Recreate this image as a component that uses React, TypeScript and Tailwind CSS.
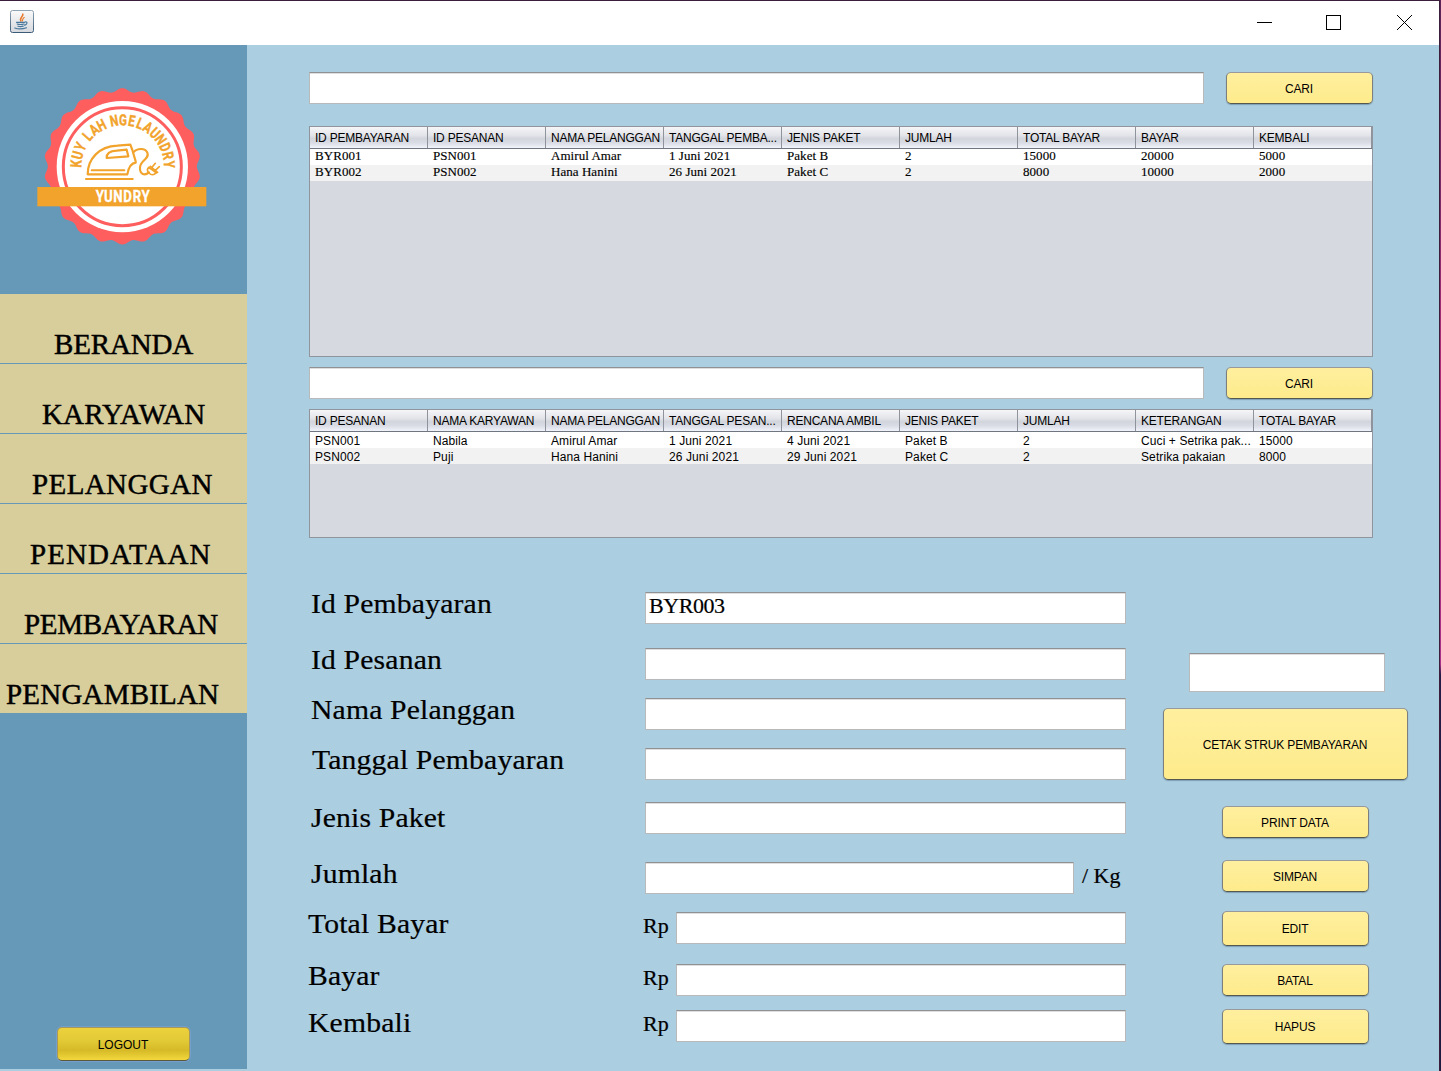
import React from "react";

const sans = "font-['Liberation_Sans',Arial,sans-serif]";
const serif = "font-['Liberation_Serif','Times_New_Roman',serif]";

const scallop = (() => {
  const pts: string[] = [];
  for (let i = 0; i <= 360; i++) {
    const a = (i * Math.PI) / 180;
    const r = 229 + 5.5 * Math.cos(22 * a);
    pts.push(`${(367 + r * Math.sin(a)).toFixed(1)} ${(499 - r * Math.cos(a)).toFixed(1)}`);
  }
  return `M${pts.join("L")}Z`;
})();

const ringLetters = (() => {
  const out: { ch: string; angle: number }[] = [];
  let pos = 0;
  for (const ch of "KUY LAH NGELAUNDRY") {
    if (ch === " ") {
      pos += 0.5;
      continue;
    }
    out.push({ ch, angle: -86.5 + pos * 10.85 });
    pos += 1;
  }
  return out;
})();

function Logo() {
  return (
    <svg className="ml-[37px] h-[158px] w-[170px]" viewBox="111 261 510 474">
      <path d={scallop} fill="#ff5e5e" />
      <circle cx="367" cy="500" r="197" fill="#fff" />
      <circle cx="367" cy="500" r="177" fill="none" stroke="#ff5e5e" strokeWidth="9" />
      <g fill="#f2a32c" stroke="#f2a32c" strokeWidth="1.2" fontFamily="Roboto, sans-serif" fontWeight="700" fontSize="46" textAnchor="middle">
        {ringLetters.map((l, i) => (
          <text key={i} transform={`translate(368 500) rotate(${l.angle}) translate(0 -124) scale(0.76 1)`}>
            {l.ch}
          </text>
        ))}
      </g>
      <g fill="none" stroke="#f2a32c" strokeWidth="6.5" strokeLinecap="round" strokeLinejoin="round">
        <path d="M263 523C263 478 296 439 352 437L391 434L397 450L407 484L407 488Q388 490 382 523Z" />
        <path d="M275 511H373" strokeWidth="6" />
        <path d="M258 537H398" />
        <path d="M320 474C319 459 335 453 350 452L380 449L385 469Z" />
        <path d="M400 457C411 444 436 443 442 458C450 477 421 480 420 502C419 524 434 528 447 517" />
        <path d="M446 502L468 518Q458 530 447 519Q438 510 446 502ZM448 505L451 499L473 517L467 520M456 502L466 490M466 511L478 500" strokeWidth="5" />
      </g>
      <rect x="112" y="561" width="507" height="58" fill="#f2a32c" />
      <text transform="translate(368 605) scale(0.78 1)" fill="#fff" stroke="#fff" strokeWidth="1" fontFamily="Roboto, sans-serif" fontWeight="700" fontSize="51" textAnchor="middle" textLength="208">
        YUNDRY
      </text>
    </svg>
  );
}

function JavaIcon() {
  return (
    <svg className="h-6 w-6" viewBox="0 0 24 24">
      <defs>
        <linearGradient id="cup" x1="0" y1="0" x2="0" y2="1">
          <stop offset="0" stopColor="#fafafa" />
          <stop offset="1" stopColor="#d5d8dd" />
        </linearGradient>
        <linearGradient id="rim" x1="0" y1="0" x2="0" y2="1">
          <stop offset="0" stopColor="#8fa3b3" />
          <stop offset="1" stopColor="#3c5b76" />
        </linearGradient>
      </defs>
      <rect x="0.5" y="0.5" width="23" height="22" rx="2" fill="url(#cup)" stroke="url(#rim)" />
      <g fill="none" strokeLinecap="round">
        <path d="M12.8 4.2C13.8 6.2 9.2 7.2 10.8 11" stroke="#e8792b" strokeWidth="1.6" />
        <path d="M14.2 7.4C12.2 8.4 13 9.6 12.4 11" stroke="#e8792b" strokeWidth="1.1" />
        <path d="M6.5 12.3H14.5M15 12Q17.5 11.7 16.8 13.5Q16 15 14.6 15.2M7.2 14Q10 15 14 14M8 16.2Q10.5 17 13.2 16.2M4.8 18Q10 20 16.5 17.8" stroke="#47779c" strokeWidth="1.2" />
      </g>
    </svg>
  );
}

function Field({ className, value = "" }: { className: string; value?: string }) {
  return (
    <div className={`${serif} shrink-0 border border-[#b7b9bb] border-t-[#8f9193] bg-white pl-[3px] text-[22px] leading-[25px] tracking-[-0.45px] text-black shadow-[inset_0_1px_0_#dedede] [-webkit-text-stroke:0.2px_black] ${className}`}>
      {value}
    </div>
  );
}

function Button({ className, children }: { className: string; children: React.ReactNode }) {
  return (
    <button className={`${sans} flex shrink-0 items-center justify-center rounded-[5px] border border-[#7d7f7c] border-t-[#97999a] border-b-[#55584f] bg-linear-to-b from-[#ffef9e] to-[#feeb8c] pt-px pr-px text-[12px] tracking-[-0.15px] text-black shadow-[0_1px_1px_rgba(90,120,145,0.55)] ${className}`}>
      {children}
    </button>
  );
}

function Table({ head, rows, className, rowClass }: { head: string[]; rows: string[][]; className: string; rowClass: string }) {
  return (
    <div className={`w-[1064px] shrink-0 border border-[#90949c] bg-[#d6d9e0] text-black ${className}`}>
      <div className={`${sans} grid h-[22px] grid-cols-9 border-b border-[#6f7680] bg-[linear-gradient(#f6f6f8_0%,#e3e4e9_40%,#d2d5dc_55%,#d9dce4_75%,#f1f4fb_100%)] text-[12px] leading-[23px] tracking-[-0.22px]`}>
        {head.map((h, i) => (
          <div key={i} className="h-[21px] overflow-hidden border-r border-[#8f939c] pl-[5px] whitespace-nowrap">
            {h}
          </div>
        ))}
      </div>
      {rows.map((r, i) => (
        <div key={i} className={`grid h-4 grid-cols-9 ${rowClass} ${i % 2 ? "bg-[#f2f2f2]" : "bg-white"}`}>
          {r.map((c, j) => (
            <div key={j} className="h-4 overflow-hidden pl-[5px] whitespace-nowrap">
              {c}
            </div>
          ))}
        </div>
      ))}
    </div>
  );
}

const nav = [
  { label: "BERANDA", cls: "pl-[54px] tracking-[-0.15px]" },
  { label: "KARYAWAN", cls: "pl-[42px] tracking-[0.15px]" },
  { label: "PELANGGAN", cls: "pl-[32px] tracking-[0.4px]" },
  { label: "PENDATAAN", cls: "pl-[30px] tracking-[1.1px]" },
  { label: "PEMBAYARAN", cls: "pl-[24px] tracking-[-0.33px]" },
  { label: "PENGAMBILAN", cls: "pl-[6px] tracking-[0.2px]" },
];

const form = [
  { label: "Id Pembayaran", row: "mt-[54px]", pad: "pl-[2px]", value: "BYR003" },
  { label: "Id Pesanan", row: "mt-6", pad: "pl-[2px]" },
  { label: "Nama Pelanggan", row: "mt-[18px]", pad: "pl-[2px]" },
  { label: "Tanggal Pembayaran", row: "mt-[18px]", pad: "pl-[3px]" },
  { label: "Jenis Paket", row: "mt-[22px]", pad: "pl-[2px] pt-1" },
  { label: "Jumlah", row: "mt-7", pad: "pl-[2px]", suffix: "/ Kg" },
  { label: "Total Bayar", row: "mt-[18px]", pad: "-ml-px mr-px", prefix: "Rp" },
  { label: "Bayar", row: "mt-5", pad: "-ml-px mr-px", prefix: "Rp" },
  { label: "Kembali", row: "mt-[14px]", pad: "-ml-px mr-px pt-px", prefix: "Rp" },
];

export default function App() {
  return (
    <div className="flex h-[1071px] w-[1441px] overflow-hidden">
      <div className="flex w-[1439px] shrink-0 flex-col">
        <header className="flex h-[45px] shrink-0 items-start justify-between border-t border-[#3b1d3c] bg-white pt-[9px] pl-[10px]">
          <JavaIcon />
          <svg className="mt-1 mr-[26px] h-[17px] w-[156px]" viewBox="0 0 156 17" fill="none" stroke="#000">
            <path d="M0 8.5H15" />
            <rect x="69.500" y="1.500" width="14" height="14" />
            <path d="M140 1L155 16M155 1L140 16" />
          </svg>
        </header>
        <div className="flex h-[1026px] bg-[#abcee1]">
          <aside className="flex h-[1024px] w-[247px] shrink-0 flex-col bg-[#6698b7] pt-[42px]">
            <Logo />
            <nav className="mt-[49px] flex flex-col">
              {nav.map((n) => (
                <div
                  key={n.label}
                  className={`${serif} h-[70px] border-b border-[#6698b7] bg-[#d8ce9b] pt-[34px] text-[29px] leading-[32px] whitespace-nowrap text-black [-webkit-text-stroke:0.45px_black] ${n.cls}`}
                >
                  {n.label}
                </div>
              ))}
            </nav>
            <button className={`${sans} mt-[313px] ml-[57px] flex h-[34px] w-[133px] shrink-0 items-center justify-center rounded-[5px] border border-[#a6985c] border-b-[#5c583c] bg-[linear-gradient(#ecd23c_0%,#e2c936_40%,#d6ba28_70%,#f2d83c_100%)] pt-[2px] pr-px text-[12px] text-black shadow-[0_0_0_1px_#739fce]`}>
              LOGOUT
            </button>
          </aside>
          <main className="flex flex-1 flex-col pt-[27px] pl-[62px]">
            <div className="flex gap-[22px]">
              <Field className="h-8 w-[895px]" />
              <Button className="h-8 w-[147px]">CARI</Button>
            </div>
            <Table
              className="mt-[22px] h-[231px]"
              rowClass="font-['Liberation_Serif',serif] text-[13px] leading-[13px] tracking-[0.05px] [-webkit-text-stroke:0.15px_black]"
              head={["ID PEMBAYARAN", "ID PESANAN", "NAMA PELANGGAN", "TANGGAL PEMBA...", "JENIS PAKET", "JUMLAH", "TOTAL BAYAR", "BAYAR", "KEMBALI"]}
              rows={[
                ["BYR001", "PSN001", "Amirul Amar", "1 Juni 2021", "Paket B", "2", "15000", "20000", "5000"],
                ["BYR002", "PSN002", "Hana Hanini", "26 Juni 2021", "Paket C", "2", "8000", "10000", "2000"],
              ]}
            />
            <div className="mt-[10px] flex gap-[22px]">
              <Field className="h-8 w-[895px]" />
              <Button className="h-8 w-[147px]">CARI</Button>
            </div>
            <Table
              className="mt-[10px] h-[129px]"
              rowClass="font-['Liberation_Sans',sans-serif] text-[12px] leading-[19px] tracking-[0.1px]"
              head={["ID PESANAN", "NAMA KARYAWAN", "NAMA PELANGGAN", "TANGGAL PESAN...", "RENCANA AMBIL", "JENIS PAKET", "JUMLAH", "KETERANGAN", "TOTAL BAYAR"]}
              rows={[
                ["PSN001", "Nabila", "Amirul Amar", "1 Juni 2021", "4 Juni 2021", "Paket B", "2", "Cuci + Setrika pak...", "15000"],
                ["PSN002", "Puji", "Hana Hanini", "26 Juni 2021", "29 Juni 2021", "Paket C", "2", "Setrika pakaian", "8000"],
              ]}
            />
            <div className="flex">
              <div className="flex w-[817px] shrink-0 flex-col">
                {form.map((f) => (
                  <div key={f.label} className={`${serif} flex h-8 text-black [-webkit-text-stroke:0.2px_black] ${f.row}`}>
                    <div className={`w-[334px] shrink-0 text-[28px] leading-[24px] whitespace-nowrap ${f.pad}`}>
                      <span className="inline-block origin-left scale-x-[1.06] tracking-[0.15px]">{f.label}</span>
                    </div>
                    {f.prefix ? (
                      <>
                        <div className="w-[33px] shrink-0 text-[22px] leading-[28px]">{f.prefix}</div>
                        <Field className="h-8 w-[450px]" />
                      </>
                    ) : f.suffix ? (
                      <>
                        <Field className="ml-[2px] h-8 w-[429px]" />
                        <div className="pl-2 text-[22px] leading-[28px]">{f.suffix}</div>
                      </>
                    ) : (
                      <Field className="ml-[2px] h-8 w-[481px]" value={f.value} />
                    )}
                  </div>
                ))}
              </div>
              <div className="ml-[37px] flex w-[245px] flex-col pt-[115px]">
                <Field className="ml-[26px] h-[39px] w-[196px]" />
                <Button className="mt-4 h-[72px] w-[245px]">CETAK STRUK PEMBAYARAN</Button>
                <Button className="mt-[26px] ml-[59px] h-8 w-[147px]">PRINT DATA</Button>
                <Button className="mt-[22px] ml-[59px] h-8 w-[147px]">SIMPAN</Button>
                <Button className="mt-[19px] ml-[59px] h-[35px] w-[147px]">EDIT</Button>
                <Button className="mt-[18px] ml-[59px] h-8 w-[147px]">BATAL</Button>
                <Button className="mt-[13px] ml-[59px] h-[35px] w-[147px]">HAPUS</Button>
              </div>
            </div>
          </main>
        </div>
      </div>
      <div className="w-px bg-[#3b1d3c]" />
      <div className="w-px bg-[linear-gradient(#5d2358_0%,#7a2a68_18%,#b02c78_34%,#a83088_62%,#241c48_63%,#1d1b40_100%)]" />
    </div>
  );
}
